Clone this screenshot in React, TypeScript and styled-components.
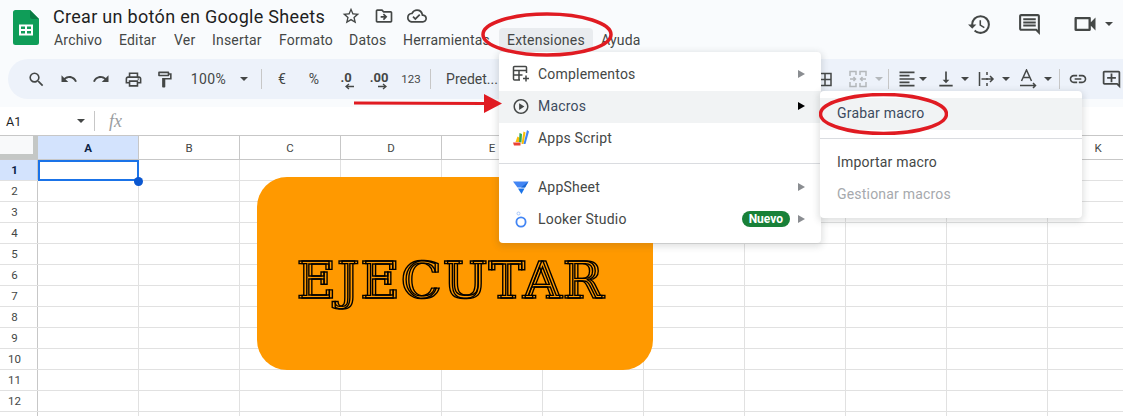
import React from "react";
import styled, { createGlobalStyle } from "styled-components";
import {
  MdSearch,
  MdUndo,
  MdRedo,
  MdOutlinePrint,
  MdOutlineFormatPaint,
  MdStarBorder,
  MdOutlineDriveFileMove,
  MdOutlineCloudDone,
  MdHistory,
  MdOutlineComment,
  MdOutlineVideocam,
  MdOutlinePlayCircle,
  MdLink,
  MdOutlineAddComment,
  MdBorderAll,
  MdFormatAlignLeft,
  MdVerticalAlignBottom,
} from "react-icons/md";

const GlobalStyle = createGlobalStyle`
  html, body {
    margin: 0;
    padding: 0;
    background: #f9fbfd;
    font-family: Roboto, "Liberation Sans", sans-serif;
  }
`;

const menuItems = [
  { label: "Archivo", w: 65 },
  { label: "Editar", w: 55 },
  { label: "Ver", w: 38 },
  { label: "Insertar", w: 67 },
  { label: "Formato", w: 70 },
  { label: "Datos", w: 54 },
  { label: "Herramientas", w: 96 },
];

const columns = ["A", "B", "C", "D", "E", "F", "G", "H", "I", "J", "K"];
const rows = [1, 2, 3, 4, 5, 6, 7, 8, 9, 10, 11, 12];

const SheetsLogo = () => (
  <svg width="26" height="35" viewBox="0 0 26 35">
    <path d="M2.5 0H17l9 9v23.5a2.5 2.5 0 0 1-2.5 2.5h-21A2.5 2.5 0 0 1 0 32.5v-30A2.5 2.5 0 0 1 2.5 0z" fill="#0f9d58" />
    <path d="M17 0l9 9h-6.500A2.500 2.500 0 0 1 17 6.500z" fill="#0a7a43" />
    <path d="M6 14.500h14v11H6zM8 16.500v2.500h4v-2.500zM14 16.500v2.500h4v-2.500zM8 21v2.500h4V21zM14 21v2.500h4V21z" fill="#fff" fillRule="evenodd" />
  </svg>
);

const AddonIcon = () => (
  <svg width="18" height="18" viewBox="0 0 18 18" fill="none" stroke="#444746" strokeWidth="1.500">
    <path d="M8 15H2.500A1 1 0 0 1 1.500 14V2.500a1 1 0 0 1 1-1h11a1 1 0 0 1 1 1V8" />
    <path d="M1.500 5.500h13M1.500 10h9M7 5.500V15" />
    <path d="M14 10.500v6M11 13.500h6" />
  </svg>
);

const AppsScriptIcon = () => (
  <svg width="16" height="16" viewBox="0 0 16 16">
    <path d="M0 12.500h7.500v3H1z" fill="#ea4335" />
    <path d="M2.500 12l2-5.500 2.500 1.500-1 4z" fill="#fbbc04" />
    <path d="M6 12l.5-9 2.500 1-.5 8.500z" fill="#34a853" />
    <path d="M8.500 14l2-12.500 2 1L10.500 14z" fill="#fbbc04" />
    <path d="M10.500 14L14 0l2 1.500L12.500 14z" fill="#4285f4" />
  </svg>
);

const AppSheetIcon = () => (
  <svg width="16" height="13" viewBox="0 0 16 13">
    <path d="M0 .5h15.500L12 6.500H4.500z" fill="#4285f4" />
    <path d="M5 7.500h6.500L8.500 13z" fill="#1a73e8" />
    <path d="M8 6.500L15.500.5 12 6.500z" fill="#1967d2" />
  </svg>
);

const LookerIcon = () => (
  <svg width="12" height="17" viewBox="0 0 12 17" fill="none" stroke="#4285f4">
    <circle cx="6" cy="11" r="4.600" strokeWidth="1.800" />
    <circle cx="3.500" cy="2.500" r="1.500" strokeWidth="1" stroke="#a8c7fa" />
  </svg>
);

const MergeIcon = () => (
  <svg width="18" height="18" viewBox="0 0 18 18" fill="none" stroke="#b4b8bb" strokeWidth="1.500">
    <path d="M1 6V1.500h6V5M11 5V1.500h6V6M1 12v4.500h6V13M11 13v3.500h6V12" />
    <path d="M1 9h5M4.500 7l2 2-2 2M17 9h-5M13.500 7l-2 2 2 2" />
  </svg>
);

const WrapIcon = () => (
  <svg width="18" height="18" viewBox="0 0 18 18" fill="none" stroke="#444746" strokeWidth="1.500">
    <path d="M1.500 2v14M9 2v3M9 8v2M9 13v3M3.500 9H15M12 6l3 3-3 3" />
  </svg>
);

const RotateIcon = () => (
  <svg width="20" height="20" viewBox="0 0 20 20" fill="none" stroke="#444746" strokeWidth="1.500">
    <path d="M2.500 12L7.500 1l5 11M4.300 8.500h6.400M1 16.500h15M14 14l2.500 2.500L14 19" />
  </svg>
);

const App = () => {
  return (
    <>
      <GlobalStyle />
      <Page>
        <Header>
          <LogoSlot>
            <SheetsLogo />
          </LogoSlot>
          <Titles>
            <TitleRow>
              <Title>Crear un botón en Google Sheets</Title>
              <TitleIcon $ml={16}>
                <MdStarBorder size={20} />
              </TitleIcon>
              <TitleIcon $ml={13}>
                <MdOutlineDriveFileMove size={20} />
              </TitleIcon>
              <TitleIcon $ml={13}>
                <MdOutlineCloudDone size={20} />
              </TitleIcon>
            </TitleRow>
            <MenuBar>
              {menuItems.map((item) => (
                <MenuLabel key={item.label} $w={item.w}>
                  {item.label}
                </MenuLabel>
              ))}
              <ActiveMenu>Extensiones</ActiveMenu>
              <MenuLabel $w={50}>Ayuda</MenuLabel>
            </MenuBar>
          </Titles>
          <Actions>
            <MdHistory size={25} />
            <MdOutlineComment size={25} />
            <MdOutlineVideocam size={28} />
            <Caret $dark />
          </Actions>
        </Header>

        <Toolbar>
          <Tool $w={32}><MdSearch size={19} /></Tool>
          <Tool $w={33}><MdUndo size={18} /></Tool>
          <Tool $w={32}><MdRedo size={18} /></Tool>
          <Tool $w={32}><MdOutlinePrint size={19} /></Tool>
          <Tool $w={31}><MdOutlineFormatPaint size={19} /></Tool>
          <ZoomText $w={57}>100%</ZoomText>
          <Tool $w={14}><Caret /></Tool>
          <Divider $ml={10} />
          <ToolText $w={40}>€</ToolText>
          <ToolText $w={24}>%</ToolText>
          <DecimalTool $w={40}>
            <strong>.0</strong>
            <DecimalArrow viewBox="0 0 9 7">
              <path d="M9 3.500H2M4 1L1 3.500 4 6" />
            </DecimalArrow>
          </DecimalTool>
          <DecimalTool $w={26}>
            <strong>.00</strong>
            <DecimalArrow viewBox="0 0 9 7">
              <path d="M0 3.500h7M5 1l3 2.500L5 6" />
            </DecimalArrow>
          </DecimalTool>
          <NumberTool $w={38}>123</NumberTool>
          <Divider />
          <ToolText $w={64} $ml={9}>Predet...</ToolText>
          <Tool $w={18} $ml={312}><MdBorderAll size={19} /></Tool>
          <Tool $w={32} $ml={8}><MergeIcon /></Tool>
          <Tool $w={10}><Caret $muted /></Tool>
          <Divider $ml={4} />
          <Tool $w={24} $ml={6}><MdFormatAlignLeft size={20} /></Tool>
          <Tool $w={8}><Caret /></Tool>
          <Tool $w={30} $ml={4}><MdVerticalAlignBottom size={20} /></Tool>
          <Tool $w={8}><Caret /></Tool>
          <Tool $w={30} $ml={3}><WrapIcon /></Tool>
          <Tool $w={8}><Caret /></Tool>
          <Tool $w={30} $ml={4}><RotateIcon /></Tool>
          <Tool $w={8}><Caret /></Tool>
          <Divider $ml={7} />
          <Tool $w={36}><MdLink size={20} /></Tool>
          <Tool $w={30}><MdOutlineAddComment size={21} /></Tool>
        </Toolbar>

        <FormulaBar>
          <CellName>A1</CellName>
          <Caret />
          <Divider $ml={9} />
          <Fx>fx</Fx>
        </FormulaBar>

        <Sheet>
          <ColumnRow>
            <Corner />
            {columns.map((c, i) => (
              <ColumnHead key={c} $active={i === 0}>
                {c}
              </ColumnHead>
            ))}
          </ColumnRow>
          {rows.map((r) => (
            <GridRow key={r}>
              <RowHead $active={r === 1}>{r}</RowHead>
              {columns.map((c, i) => (
                <Cell key={c}>{r === 1 && i === 0 && <Selection />}</Cell>
              ))}
            </GridRow>
          ))}
          <LastRow>
            <LastHead />
            {columns.map((c) => (
              <Cell key={c} />
            ))}
          </LastRow>
        </Sheet>

        <RunButton>
          <RunLabel>EJECUTAR</RunLabel>
        </RunButton>

        <MainMenu>
          <MenuRow>
            <MenuIcon><AddonIcon /></MenuIcon>
            <MenuText>Complementos</MenuText>
            <Arrow />
          </MenuRow>
          <MenuRow $hover>
            <MenuIcon><MdOutlinePlayCircle size={19} /></MenuIcon>
            <MenuText $hover>Macros</MenuText>
            <Arrow $dark />
          </MenuRow>
          <MenuRow>
            <MenuIcon><AppsScriptIcon /></MenuIcon>
            <MenuText>Apps Script</MenuText>
          </MenuRow>
          <MenuDivider $mt={8} />
          <MenuRow>
            <MenuIcon><AppSheetIcon /></MenuIcon>
            <MenuText>AppSheet</MenuText>
            <Arrow />
          </MenuRow>
          <MenuRow>
            <MenuIcon><LookerIcon /></MenuIcon>
            <MenuText>Looker Studio</MenuText>
            <Badge>Nuevo</Badge>
            <Arrow />
          </MenuRow>
        </MainMenu>

        <SubMenu>
          <SubRow $hover>Grabar macro</SubRow>
          <MenuDivider $mt={8} />
          <SubRow>Importar macro</SubRow>
          <SubRow $disabled>Gestionar macros</SubRow>
        </SubMenu>

        <RingExtensions viewBox="0 0 132 45">
          <ellipse cx="66" cy="22.500" rx="64" ry="20.500" />
        </RingExtensions>
        <RingGrabar viewBox="0 0 129 42">
          <ellipse cx="64.500" cy="21" rx="63" ry="19.500" />
        </RingGrabar>
        <RedArrow viewBox="0 0 148 22">
          <path d="M0 9.500L130 10V2l18 9.500L130 21v-8L0 12.500z" />
        </RedArrow>
      </Page>
    </>
  );
};

const Page = styled.div`
  position: relative;
  width: 1123px;
  height: 416px;
  overflow: hidden;
  background: #f9fbfd;
  color: #444746;
`;

const Header = styled.div`
  display: flex;
  height: 59px;
`;

const LogoSlot = styled.div`
  width: 53px;
  padding: 10px 0 0 13px;
  box-sizing: border-box;
`;

const Titles = styled.div`
  display: flex;
  flex-direction: column;
`;

const TitleRow = styled.div`
  display: flex;
  align-items: center;
  height: 28px;
  margin-top: 2px;
`;

const Title = styled.div`
  font-size: 18px;
  letter-spacing: 0.3px;
  color: #1f1f1f;
  white-space: nowrap;
`;

const TitleIcon = styled.span<{ $ml: number }>`
  display: flex;
  margin-left: ${(p) => p.$ml}px;
  color: #444746;
`;

const MenuBar = styled.div`
  display: flex;
  align-items: center;
  height: 24px;
  margin-top: -2px;
  margin-left: 1px;
  font-size: 14px;
`;

const MenuLabel = styled.span<{ $w: number }>`
  width: ${(p) => p.$w}px;
  white-space: nowrap;
  letter-spacing: 0.2px;
`;

const ActiveMenu = styled.span`
  padding: 0 8px;
  margin-right: 8px;
  width: 78px;
  height: 24px;
  line-height: 24px;
  background: #e9ecef;
  border-radius: 4px;
  letter-spacing: 0.2px;
  white-space: nowrap;
`;

const Actions = styled.div`
  display: flex;
  align-items: center;
  height: 48px;
  margin-left: auto;
  padding-right: 10px;
  gap: 25px;
  color: #444746;
  svg:nth-child(3) {
    margin-left: 4px;
    margin-right: -19px;
  }
`;

const Caret = styled.span<{ $dark?: boolean; $muted?: boolean }>`
  display: inline-block;
  width: 0;
  height: 0;
  border-left: 4.500px solid transparent;
  border-right: 4.500px solid transparent;
  border-top: 4.500px solid ${(p) => (p.$muted ? "#b4b8bb" : "#444746")};
`;

const Toolbar = styled.div`
  display: flex;
  align-items: center;
  height: 40px;
  margin-left: 8px;
  padding-left: 12px;
  width: 1200px;
  box-sizing: border-box;
  background: #edf2fa;
  border-radius: 20px;
`;

const Tool = styled.span<{ $w: number; $ml?: number }>`
  display: flex;
  flex: none;
  align-items: center;
  justify-content: center;
  width: ${(p) => p.$w}px;
  margin-left: ${(p) => p.$ml || 0}px;
  color: #444746;
`;

const ToolText = styled(Tool)`
  font-size: 14px;
  white-space: nowrap;
`;

const ZoomText = styled(ToolText)`
  letter-spacing: 0.4px;
`;

const DecimalTool = styled(Tool)`
  position: relative;
  font-size: 13px;
  height: 24px;
  strong {
    margin-top: -4px;
  }
`;

const DecimalArrow = styled.svg`
  position: absolute;
  right: calc(50% - 8px);
  bottom: 1px;
  width: 9px;
  height: 7px;
  fill: none;
  stroke: #444746;
  stroke-width: 1.300;
`;

const NumberTool = styled(Tool)`
  font-size: 11.500px;
`;

const Divider = styled.span<{ $ml?: number }>`
  flex: none;
  width: 1px;
  height: 20px;
  margin-left: ${(p) => p.$ml || 0}px;
  background: #c7c7c7;
`;

const FormulaBar = styled.div`
  display: flex;
  align-items: center;
  height: 28px;
  margin-top: 8px;
  background: #fff;
  padding-left: 6px;
`;

const CellName = styled.span`
  width: 71px;
  font-size: 12.500px;
  color: #1f1f1f;
`;

const Fx = styled.span`
  margin-left: 14px;
  font-family: "Liberation Serif", serif;
  font-style: italic;
  font-size: 18px;
  color: #9a9da0;
`;

const Sheet = styled.div`
  background: #fff;
  border-top: 1px solid #c7c7c7;
`;

const ColumnRow = styled.div`
  display: flex;
  height: 23px;
  border-bottom: 1px solid #c7c7c7;
`;

const Corner = styled.div`
  flex: none;
  width: 33px;
  height: 18px;
  background: #f8f9fa;
  border-right: 5px solid #c4c7c5;
  border-bottom: 5px solid #c4c7c5;
`;

const ColumnHead = styled.div<{ $active?: boolean }>`
  flex: none;
  width: 100px;
  display: flex;
  align-items: center;
  justify-content: center;
  font-size: 11.500px;
  border-right: 1px solid #c7c7c7;
  font-weight: ${(p) => (p.$active ? 700 : 400)};
  color: ${(p) => (p.$active ? "#0b1f45" : "#444746")};
  background: ${(p) => (p.$active ? "#d3e3fd" : "#fff")};
`;

const GridRow = styled.div`
  display: flex;
  height: 20px;
  border-bottom: 1px solid #e1e1e1;
`;

const LastRow = styled.div`
  display: flex;
  height: 5px;
  overflow: hidden;
`;

const RowHead = styled.div<{ $active?: boolean }>`
  flex: none;
  width: 38px;
  display: flex;
  align-items: center;
  justify-content: center;
  padding-right: 8px;
  box-sizing: border-box;
  font-size: 11.500px;
  border-right: 1px solid #c7c7c7;
  font-weight: ${(p) => (p.$active ? 700 : 400)};
  color: ${(p) => (p.$active ? "#0b1f45" : "#444746")};
  background: ${(p) => (p.$active ? "#d3e3fd" : "#fff")};
`;

const LastHead = styled(RowHead)``;

const Cell = styled.div`
  position: relative;
  flex: none;
  width: 100px;
  border-right: 1px solid #e1e1e1;
`;

const Selection = styled.div`
  position: absolute;
  z-index: 2;
  inset: 0 -1px -1px 0;
  border: 2px solid #1a73e8;
  &::after {
    content: "";
    position: absolute;
    right: -6px;
    bottom: -7px;
    width: 9px;
    height: 9px;
    border-radius: 50%;
    background: #0b57d0;
  }
`;

const RunButton = styled.div`
  position: absolute;
  left: 257px;
  top: 177px;
  width: 396px;
  height: 193px;
  display: flex;
  align-items: center;
  justify-content: center;
  background: #ff9900;
  border-radius: 30px;
`;

const RunLabel = styled.div`
  position: relative;
  margin-top: 14px;
  margin-left: -10px;
  font-family: "DejaVu Serif", serif;
  font-size: 51px;
  letter-spacing: 3px;
  line-height: 1;
  color: transparent;
  -webkit-text-stroke: 1.400px #000;
  &::after {
    content: "EJECUTAR";
    position: absolute;
    left: 3px;
    top: 0;
  }
`;

const MainMenu = styled.div`
  position: absolute;
  left: 499px;
  top: 52px;
  width: 322px;
  height: 191px;
  padding-top: 7px;
  box-sizing: border-box;
  background: #fff;
  border-radius: 4px;
  box-shadow: 0 2px 6px 2px rgba(60, 64, 67, 0.15);
`;

const MenuRow = styled.div<{ $hover?: boolean }>`
  display: flex;
  align-items: center;
  height: 32px;
  padding: 0 16px 2px 13px;
  box-sizing: border-box;
  background: ${(p) => (p.$hover ? "#f1f3f4" : "transparent")};
`;

const MenuIcon = styled.span`
  display: flex;
  justify-content: center;
  width: 18px;
  margin-right: 8px;
  color: #444746;
`;

const MenuText = styled.span<{ $hover?: boolean }>`
  flex: 1;
  font-size: 14px;
  letter-spacing: 0.2px;
  color: ${(p) => (p.$hover ? "#3c4a5e" : "#444746")};
`;

const Arrow = styled.span<{ $dark?: boolean }>`
  width: 0;
  height: 0;
  margin-left: 6px;
  border-top: 4px solid transparent;
  border-bottom: 4px solid transparent;
  border-left: 7px solid ${(p) => (p.$dark ? "#000" : "#8a8d91")};
`;

const Badge = styled.span`
  padding: 0 7px;
  margin-right: 2px;
  height: 16px;
  line-height: 16px;
  border-radius: 8px;
  background: #188038;
  color: #fff;
  font-size: 12px;
  font-weight: 700;
`;

const MenuDivider = styled.div<{ $mt: number }>`
  height: 1px;
  margin: ${(p) => p.$mt}px 0 8px;
  background: #dadce0;
`;

const SubMenu = styled.div`
  position: absolute;
  left: 820px;
  top: 91px;
  width: 262px;
  height: 127px;
  padding-top: 7px;
  box-sizing: border-box;
  background: #fff;
  border-radius: 4px;
  box-shadow: 0 2px 6px 2px rgba(60, 64, 67, 0.15);
`;

const SubRow = styled.div<{ $hover?: boolean; $disabled?: boolean }>`
  display: flex;
  align-items: center;
  height: 32px;
  padding-left: 17px;
  padding-bottom: 2px;
  box-sizing: border-box;
  font-size: 14px;
  letter-spacing: 0.2px;
  background: ${(p) => (p.$hover ? "#f1f3f4" : "transparent")};
  color: ${(p) => (p.$disabled ? "#a6a9ad" : p.$hover ? "#3c4a5e" : "#444746")};
`;

const RingExtensions = styled.svg`
  position: absolute;
  left: 481px;
  top: 12px;
  width: 132px;
  height: 45px;
  fill: none;
  stroke: #e01b22;
  stroke-width: 3.500;
`;

const RingGrabar = styled.svg`
  position: absolute;
  left: 819px;
  top: 93px;
  width: 129px;
  height: 42px;
  fill: none;
  stroke: #e01b22;
  stroke-width: 3.500;
`;

const RedArrow = styled.svg`
  position: absolute;
  left: 354px;
  top: 92px;
  width: 148px;
  height: 22px;
  fill: #e01b22;
`;

export default App;
